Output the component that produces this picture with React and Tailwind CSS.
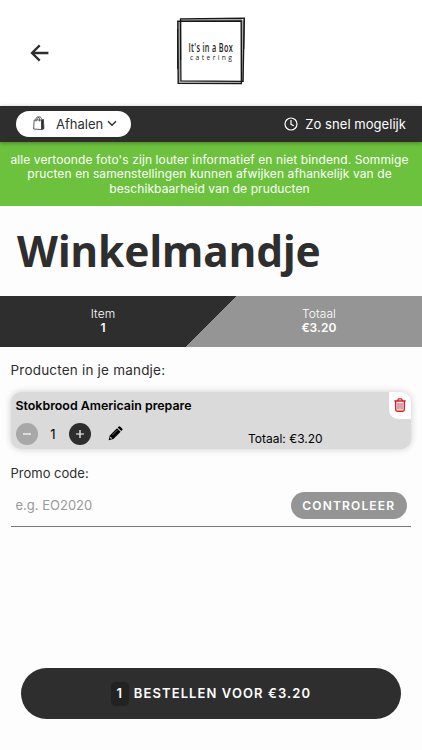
import { useState } from "react";

const PRICE = 3.2;

function Logo() {
  return (
    <svg width="70" height="70" viewBox="0 0 70 70" fill="none" stroke="#171717">
      <path d="M3 4.5v61.5M3 65.2h62M4 2.9h62M66.8 3v62" stroke="#aaa" strokeWidth="2" />
      <path d="M4.5 1.8 68.3 1.2 67 64.4 4.9 63.8Z" strokeWidth="1.3" />
      <path d="M1.8 4.2 65.2 4 65.4 66.6 2.2 66.4Z" strokeWidth="1.4" />
      <path d="M1.6 12v40M4.7 3v40M68.2 2l-.4 30" strokeWidth="1" />
      <g fill="#222" stroke="none">
        <text transform="translate(12.5 34.8) scale(.56 1)" fontSize="13" fontWeight="600" fontFamily="'Open Sans', sans-serif" textLength="79">
          It's in a Box
        </text>
        <text x="14" y="42.7" fontSize="6.8" fontFamily="'Open Sans', sans-serif" textLength="42">
          catering
        </text>
      </g>
    </svg>
  );
}

function BackArrow() {
  return (
    <svg width="20" height="18" viewBox="0 0 20 18" fill="none" stroke="#2e2e2e" strokeWidth="2.3">
      <path d="M18.4 9H2M9.7 1.4 2 9l7.7 7.6" />
    </svg>
  );
}

function BagIcon() {
  return (
    <svg width="12" height="15" viewBox="0 0 12 15" fill="none" stroke="#333" strokeWidth=".8">
      <path d="M1.2 4h7.4v9.6l-8-.6Z" />
      <path d="M8.6 4 10.4 3.4 10.9 12.7 8.8 13.6Z" fill="#333" />
      <path d="M3 5.5V3.2C3 .2 6.5.2 6.7 3.2v2.3M4.5 3.5C4.8-.3 8.4.2 8.6 3.5" />
    </svg>
  );
}

function PencilIcon() {
  return (
    <svg width="15" height="15" viewBox="0 0 15 15" fill="#000">
      <path d="M1.8 9.4 9 2.2l3.6 3.6-7.2 7.2-4.8 1.2Z" />
      <path d="m9.7 1.5.8-.8q.9-.8 1.8 0l1.8 1.8q.9.9 0 1.8l-.8.8Z" />
      <path d="m2.4 10.6 1.8 1.8-1.4.4-.8-.8Z" fill="#dadada" />
      <path d="m4.2 9.2 5-5" stroke="#dadada" strokeWidth=".5" />
    </svg>
  );
}

function TrashIcon() {
  return (
    <svg width="12" height="14" viewBox="0 0 12 14" fill="none" stroke="#d5202b" strokeLinecap="round" strokeLinejoin="round">
      <path d="M.8 3h10.4" strokeWidth="1.5" />
      <path d="M3.7 2.6 4.3.9h3.4l.6 1.7" strokeWidth="1.3" />
      <path d="M1.7 3.4v8.2q0 1.6 1.5 1.6h5.6q1.5 0 1.5-1.6V3.4" strokeWidth="1.4" />
      <path d="M4 5.3v5.6M6 5.3v5.6M8 5.3v5.6" strokeWidth=".9" />
    </svg>
  );
}

export default function App() {
  const [count, setCount] = useState(1);
  const [promo, setPromo] = useState("");
  const total = `€${(count * PRICE).toFixed(2)}`;

  return (
    <div className="h-[750px] w-[422px] overflow-hidden bg-[#fdfdfd] font-['Inter',sans-serif] text-[#2e2e2e] flex flex-col">
      <header className="grid h-[105.5px] shrink-0 grid-cols-3 items-center bg-white">
        <button className="ml-[30px] w-5">
          <BackArrow />
        </button>
        <div className="flex justify-center pb-[2px]">
          <Logo />
        </div>
      </header>

      <div className="z-10 flex h-9 shrink-0 items-center justify-between bg-[#2e2e2e] pr-4 pl-4 shadow-[0_1px_4px_rgba(0,0,0,0.35)]">
        <button className="flex h-[26px] w-[115px] items-center rounded-full bg-white pl-[17px]">
          <BagIcon />
          <span className="ml-[11px] w-[46px] text-[13px] leading-4 whitespace-nowrap">Afhalen</span>
          <svg className="ml-[5px]" width="10" height="7" viewBox="0 0 10 7" fill="none" stroke="#2e2e2e" strokeWidth="1.4">
            <path d="m1 1.2 4 4 4-4" />
          </svg>
        </button>
        <div className="flex items-center gap-[7px] text-white">
          <svg width="14" height="14" viewBox="0 0 14 14" fill="none" stroke="white" strokeWidth="1.2">
            <circle cx="7" cy="7" r="6" />
            <path d="M7 3v4.3l2.8 1.5" />
          </svg>
          <span className="text-[13px] leading-4 tracking-[0.05px]">Zo snel mogelijk</span>
        </div>
      </div>

      <div className="h-16 shrink-0 bg-[#6cc23c] pt-[11px] pr-[3px] text-center text-[12px] leading-[14.5px] tracking-[0.1px] whitespace-nowrap text-white">
        <p>alle vertoonde foto's zijn louter informatief en niet bindend. Sommige</p>
        <p>pructen en samenstellingen kunnen afwijken afhankelijk van de</p>
        <p>beschikbaarheid van de pruducten</p>
      </div>

      <h1 className="flex h-[90px] shrink-0 items-center pl-[17px] font-['Noto_Sans',sans-serif] text-[42.3px] font-bold">
        Winkelmandje
      </h1>

      <div className="grid h-[51px] shrink-0 grid-cols-2 bg-[linear-gradient(135deg,#2e2e2e_50%,#959595_50%)] pt-[11px] text-center text-[12px] leading-[14.5px] tracking-[0.1px] text-white">
        <div className="pr-[5px]">
          <p className="font-light">Item</p>
          <p className="font-semibold">{count}</p>
        </div>
        <div className="pl-[5px]">
          <p className="font-light">Totaal</p>
          <p className="font-semibold">{total}</p>
        </div>
      </div>

      <main className="flex flex-col pr-[11px] pl-[10.5px]">
        <h2 className="mt-[15px] text-[13.5px] leading-4 tracking-[0.2px]">Producten in je mandje:</h2>
        <section className="relative mt-[14px] h-[57px] rounded-[10px] bg-[#dadada] pl-[5px] text-black shadow-[0_0_7px_rgba(0,0,0,0.2)]">
          <h3 className="pt-[6px] text-[12.4px] leading-4 font-semibold">Stokbrood Americain prepare</h3>
          <div className="mt-[9px] flex h-[22px] items-center">
            <button
              onClick={() => setCount(Math.max(1, count - 1))}
              className="flex size-[22px] items-center justify-center rounded-full bg-[#a8a8a8]"
            >
              <svg width="8" height="8" viewBox="0 0 8 8" stroke="white">
                <path d="M0 4h8" strokeWidth="1.2" />
              </svg>
            </button>
            <span className="w-[31px] text-center text-[13px] leading-4">{count}</span>
            <button
              onClick={() => setCount(count + 1)}
              className="flex size-[22px] items-center justify-center rounded-full bg-[#2e2e2e]"
            >
              <svg width="8" height="8" viewBox="0 0 8 8" stroke="white">
                <path d="M0 4h8M4 0v8" strokeWidth="1.2" />
              </svg>
            </button>
            <button className="ml-[17px]">
              <PencilIcon />
            </button>
            <span className="mt-[10px] ml-[125.5px] text-[12px] leading-4">Totaal: {total}</span>
          </div>
          <button className="absolute top-0 right-0 flex h-[27px] w-[22px] items-center justify-center rounded-tr-[10px] rounded-bl-[9px] bg-white">
            <TrashIcon />
          </button>
        </section>

        <label className="mt-4 text-[13px] leading-4">Promo code:</label>
        <div className="mt-[5px] flex h-[41px] items-center justify-between border-b border-[#777] pr-1 pl-[5px]">
          <input
            className="w-[200px] pt-px text-[13px] outline-none placeholder:text-[#999]"
            placeholder="e.g. EO2020"
            value={promo}
            onChange={(e) => setPromo(e.target.value)}
          />
          <button className="h-[27px] w-[116.5px] rounded-full bg-[#959595] pt-px text-[12px] font-semibold tracking-[1.15px] text-white">
            CONTROLEER
          </button>
        </div>
      </main>

      <footer className="mt-auto px-[21px] pb-[31px]">
        <button className="flex h-[51px] w-full items-center justify-center gap-[5px] rounded-full bg-[#2e2e2e] pt-px text-[13px] font-semibold tracking-[1.1px] text-white">
          <span className="flex h-6 w-[18px] items-center justify-center rounded-[5px] bg-[#222]">{count}</span>
          <span>BESTELLEN VOOR {total}</span>
        </button>
      </footer>
    </div>
  );
}
